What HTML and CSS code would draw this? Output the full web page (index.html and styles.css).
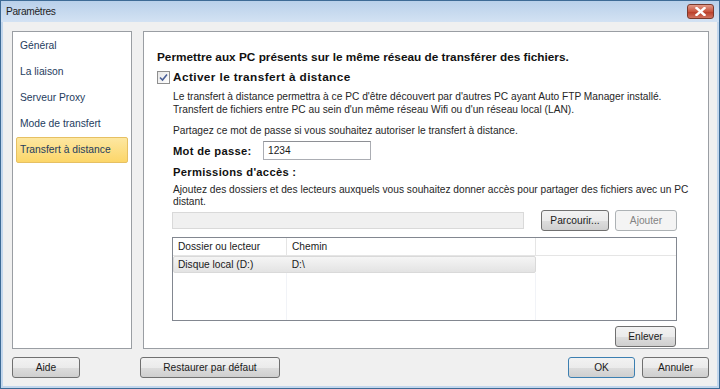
FILE: index.html
```html
<!DOCTYPE html>
<html lang="fr">
<head>
  <meta charset="UTF-8">
  <title>Paramètres</title>
  <link rel="stylesheet" href="styles.css">
</head>
<body>

  <div class="window">
    <div class="titlebar">
      <span class="title">Paramètres</span>
      <div class="close">
        <svg width="11" height="9" viewBox="0 0 11 9"><path d="M1.5 1 L9.5 8 M9.5 1 L1.5 8" stroke="#fff" stroke-width="2.4" stroke-linecap="square"/></svg>
      </div>
    </div>

    <div class="client">
      <div class="main">
        <ul class="nav">
          <li>Général</li>
          <li>La liaison</li>
          <li>Serveur Proxy</li>
          <li>Mode de transfert</li>
          <li class="active">Transfert à distance</li>
        </ul>

        <div class="panel">
          <h2>Permettre aux PC présents sur le même réseau de transférer des fichiers.</h2>

          <label class="check">
            <span class="box">
              <svg width="9" height="9" viewBox="0 0 9 9"><path d="M1 4.5 L3.5 7 L8 1.5" fill="none" stroke="#4a5f97" stroke-width="1.6"/></svg>
            </span>
            Activer le transfert à distance
          </label>

          <div class="indent">
            <p class="desc">Le transfert à distance permettra à ce PC d'être découvert par d'autres PC ayant Auto FTP Manager installé.<br>Transfert de fichiers entre PC au sein d'un même réseau Wifi ou d'un réseau local (LAN).</p>
            <p class="share">Partagez ce mot de passe si vous souhaitez autoriser le transfert à distance.</p>

            <div class="pass-row">
              <span class="label">Mot de passe:</span>
              <div class="textbox">1234</div>
            </div>

            <div class="label perm">Permissions d'accès :</div>
            <p class="help">Ajoutez des dossiers et des lecteurs auxquels vous souhaitez donner accès pour partager des fichiers avec un PC distant.</p>

            <div class="browse-row">
              <div class="textbox disabled"></div>
              <button class="btn browse">Parcourir...</button>
              <button class="btn add" disabled>Ajouter</button>
            </div>

            <div class="list">
              <div class="list-head">
                <div class="col c1">Dossier ou lecteur</div>
                <div class="col c2">Chemin</div>
                <div class="col c3"></div>
              </div>
              <div class="list-row selected">
                <div class="col c1">Disque local (D:)</div>
                <div class="col c2">D:\</div>
              </div>
              <div class="list-fill">
                <div class="col c1"></div>
                <div class="col c2"></div>
                <div class="col c3"></div>
              </div>
            </div>

            <div class="remove-row">
              <button class="btn remove">Enlever</button>
            </div>
          </div>
        </div>
      </div>

      <div class="footer">
        <button class="btn help-btn">Aide</button>
        <button class="btn restore">Restaurer par défaut</button>
        <div class="spacer"></div>
        <button class="btn ok">OK</button>
        <button class="btn cancel">Annuler</button>
      </div>
    </div>
  </div>

</body>
</html>
```

FILE: styles.css
```css
* {
  box-sizing: border-box;
}

body {
  margin: 0;
  font-family: 'Liberation Sans', Arial, sans-serif;
  font-size: 10.2px;
  color: #1a1a1a;
}

.window {
  width: 720px;
  height: 389px;
  border: 1px solid #3e6b96;
  background: #c3d7ed;
  display: flex;
  flex-direction: column;
}

.titlebar {
  height: 21px;
  background: linear-gradient(#b9d0ea, #d3e2f3);
  display: flex;
  align-items: center;
  padding-left: 5px;
  position: relative;
}

.title {
  font-size: 10.2px;
  letter-spacing: -0.3px;
  color: #1e1e1e;
}

.close {
  position: absolute;
  right: 5px;
  top: 3px;
  width: 27px;
  height: 15px;
  border: 1px solid #7b3a2d;
  border-radius: 3px;
  background: linear-gradient(#e19a89, #c8553f 50%, #b83a25 51%, #d07360);
  display: flex;
  align-items: center;
  justify-content: center;
}

.client {
  flex: 1;
  margin: 0 2px 2px;
  background: #f0f0f0;
  padding: 9px 8px 0 9px;
}

.main {
  display: flex;
  gap: 11px;
  height: 318px;
}

.nav {
  width: 120px;
  margin: 0;
  padding: 1px 3px;
  list-style: none;
  background: #fff;
  border: 1px solid #9a9ea3;
}

.nav li {
  height: 26px;
  line-height: 24px;
  padding-left: 3px;
  border: 1px solid transparent;
  border-radius: 2px;
  font-size: 10.3px;
  color: #253c5e;
}

.nav li.active {
  background: linear-gradient(#fde7a1, #fcd669);
  border-color: #e6c063;
}

.panel {
  flex: 1;
  background: #fff;
  border: 1px solid #9a9ea3;
  padding: 18px 31px 0 13px;
}

h2 {
  margin: 0;
  font-size: 11.8px;
  line-height: 14px;
  font-weight: bold;
  color: #111;
}

.check {
  display: flex;
  align-items: center;
  gap: 3px;
  margin-top: 6px;
  height: 14px;
  font-size: 11.8px;
  letter-spacing: 0.4px;
  font-weight: bold;
  color: #111;
}

.box {
  width: 13px;
  height: 13px;
  border: 1px solid #8f8f8f;
  background: linear-gradient(135deg, #e6e6e6, #fff);
  display: flex;
  align-items: center;
  justify-content: center;
}

.indent {
  margin-left: 15px;
}

.indent p {
  margin: 0;
  padding-left: 1px;
  color: #262626;
}

.desc {
  margin-top: 6px !important;
  line-height: 13px;
}

.share {
  margin-top: 8px !important;
  line-height: 13px;
}

.label {
  font-weight: bold;
  font-size: 11.2px;
  letter-spacing: 0.3px;
  padding-left: 1px;
  color: #111;
}

.pass-row {
  display: flex;
  align-items: center;
  margin-top: 4px;
}

.pass-row .label {
  width: 91px;
}

.textbox {
  width: 108px;
  height: 19px;
  border: 1px solid #abadb3;
  border-top-color: #8e9095;
  background: #fff;
  padding: 3px 0 0 4px;
}

.perm {
  margin-top: 5px;
  line-height: 14px;
}

.help {
  margin-top: 5px !important;
  margin-right: -30px !important;
  line-height: 12px;
}

.browse-row {
  display: flex;
  align-items: center;
  margin-top: 2px;
  height: 21px;
}

.textbox.disabled {
  width: 352px;
  height: 17px;
  background: #f0f0f0;
  border: 1px solid #d9d9d9;
  margin-right: 17px;
}

.btn {
  height: 21px;
  border: 1px solid #707070;
  border-radius: 3px;
  background: linear-gradient(#f2f2f2, #ebebeb 50%, #dddddd 51%, #cfcfcf);
  font-family: 'Liberation Sans', Arial, sans-serif;
  font-size: 10.2px;
  color: #1a1a1a;
  padding: 0;
}

.browse {
  width: 68px;
  margin-right: 6px;
}

.add {
  width: 62px;
}

.btn:disabled {
  border-color: #adb2b5;
  background: #f4f4f4;
  color: #838383;
}

.list {
  margin-top: 6px;
  height: 84px;
  border: 1px solid #828790;
  background: #fff;
  display: flex;
  flex-direction: column;
}

.list-head,
.list-row,
.list-fill {
  display: flex;
}

.list-head {
  height: 18px;
  line-height: 17px;
  border-bottom: 1px solid #e5e5e5;
}

.list-head .col {
  border-right: 1px solid #e5e5e5;
}

.list-head .c3 {
  border-right: none;
}

.col {
  padding-left: 5px;
  white-space: nowrap;
}

.c1 {
  width: 114px;
}

.c2 {
  width: 249px;
}

.c3 {
  flex: 1;
}

.list-row {
  height: 17px;
  line-height: 15px;
  width: 363px;
}

.list-row.selected {
  background: linear-gradient(#f5f5f5, #e3e3e3);
  border: 1px solid #d9d9d9;
  border-radius: 2px;
}

.list-row .c1 {
  width: 113px;
  padding-left: 4px;
}

.list-fill {
  flex: 1;
}

.list-fill .col {
  border-right: 1px solid #f1f3f7;
}

.list-fill .c3 {
  border-right: none;
}

.remove-row {
  display: flex;
  justify-content: flex-end;
  margin-top: 5px;
}

.remove {
  width: 61px;
  margin-right: 1px;
}

.footer {
  display: flex;
  margin-top: 8px;
}

.help-btn {
  width: 68px;
}

.restore {
  width: 140px;
  margin-left: 60px;
}

.spacer {
  flex: 1;
}

.ok {
  width: 67px;
  margin-right: 7px;
  border-color: #3c7fb1;
}

.cancel {
  width: 67px;
}
```
